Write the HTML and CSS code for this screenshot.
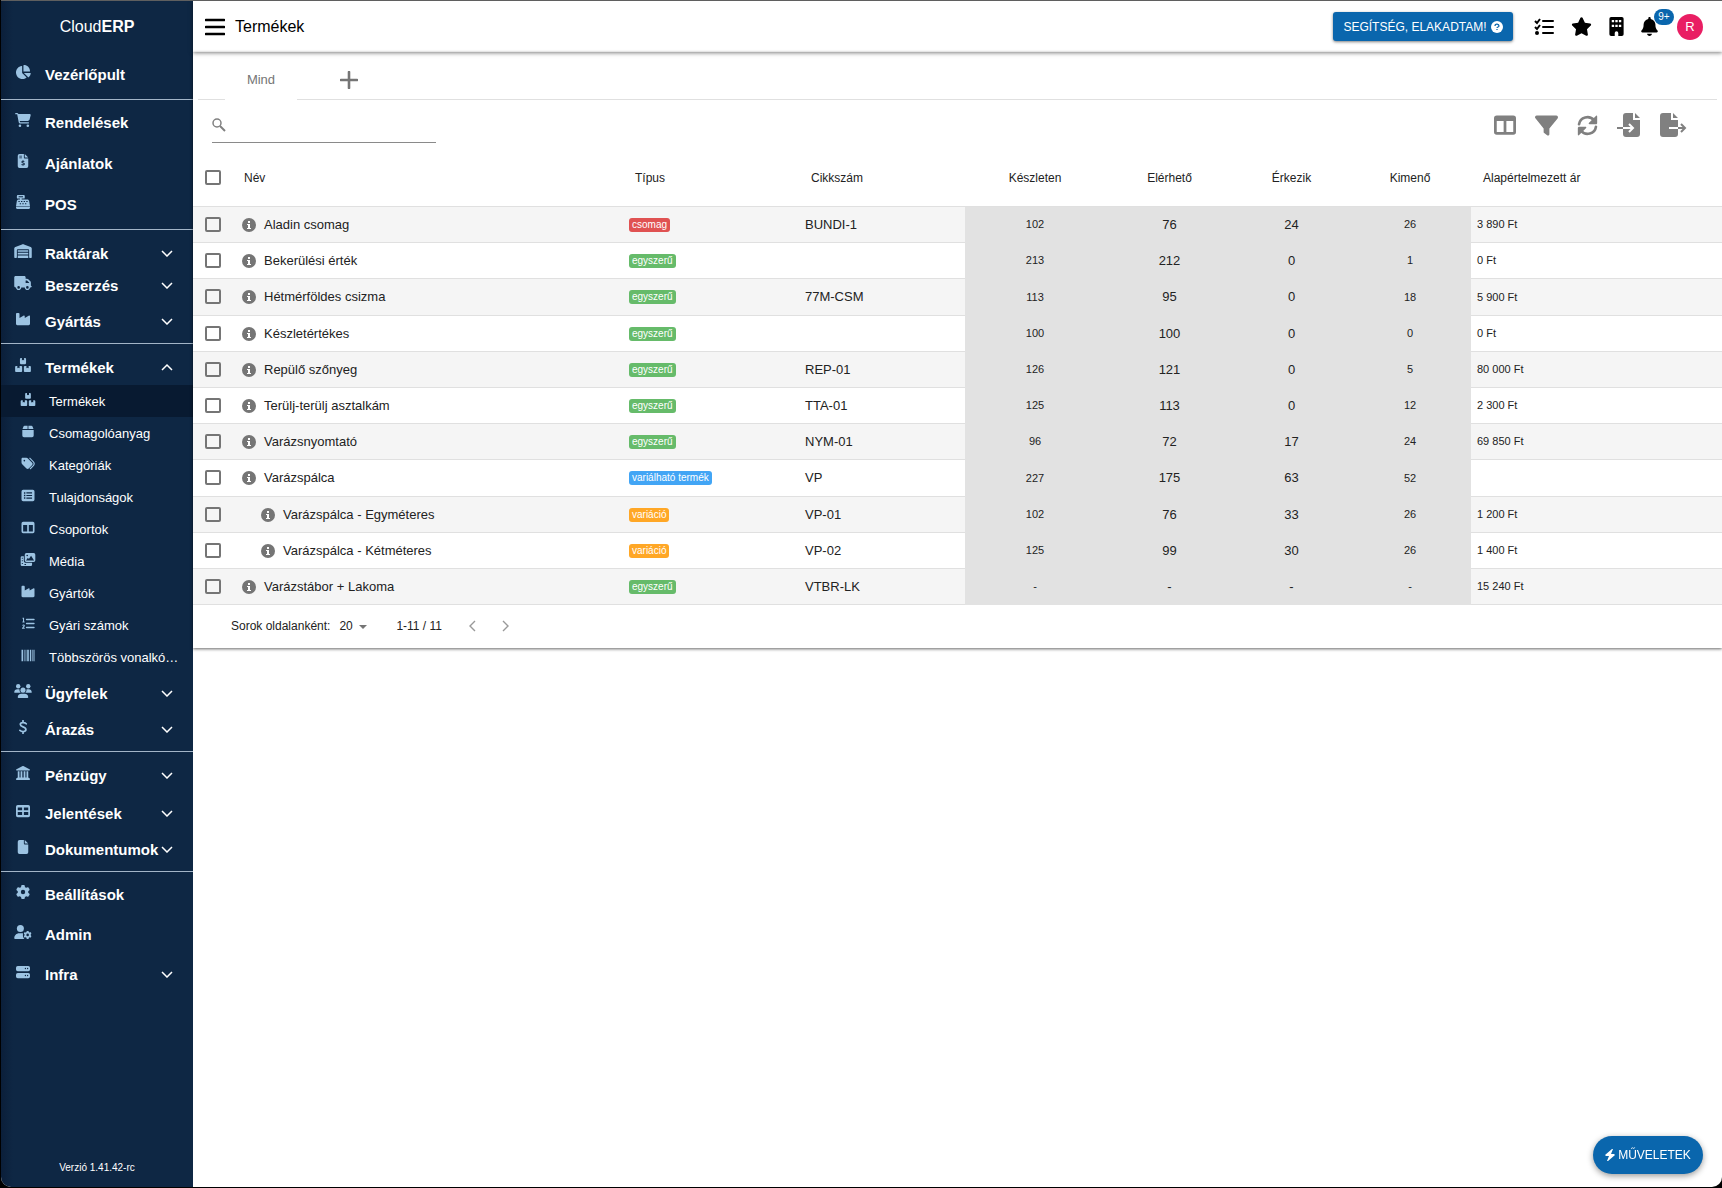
FILE: index.html
```html
<!DOCTYPE html>
<html lang="hu">
<head>
  <meta charset="utf-8">
  <title>CloudERP - Termékek</title>
  <link rel="stylesheet" href="styles.css">
</head>
<body>
  <svg class="sprite" aria-hidden="true">
    <symbol id="pie" viewBox="0 0 576 512"><path d="M304 240V16.600c0-9 7-16.600 16-16.600C443.700 0 544 100.300 544 224c0 9-7.600 16-16.600 16H304zM32 272C32 150.700 122.100 50.300 239 34.300c9.200-1.300 17 6.100 17 15.400V288L412.500 444.500c6.700 6.700 6.200 17.700-1.500 23.100C371.800 495.600 323.800 512 272 512C139.500 512 32 404.600 32 272zm526.400 16c9.300 0 16.600 7.800 15.400 17c-7.700 55.900-34.600 105.600-73.900 142.300c-6 5.600-15.400 5.200-21.200-.7L320 288H558.400z"/></symbol>
    <symbol id="cart" viewBox="0 0 576 512"><path d="M0 24C0 10.700 10.700 0 24 0H69.500c22 0 41.500 12.800 50.600 32h411c26.300 0 45.500 25 38.600 50.400l-41 152.300c-8.500 31.400-37 53.300-69.500 53.300H170.700l5.400 28.500c2.200 11.300 12.100 19.500 23.600 19.500H488c13.300 0 24 10.700 24 24s-10.700 24-24 24H199.700c-34.600 0-64.300-24.600-70.700-58.500L77.400 54.500c-.7-3.800-4-6.500-7.900-6.500H24C10.700 48 0 37.300 0 24zM128 464a48 48 0 1 1 96 0 48 48 0 1 1 -96 0zm336-48a48 48 0 1 1 0 96 48 48 0 1 1 0-96z"/></symbol>
    <symbol id="invoice" viewBox="0 0 384 512"><path fill-rule="evenodd" d="M64 0h160v128a32 32 0 0 0 32 32h128v288a64 64 0 0 1-64 64H64a64 64 0 0 1-64-64V64A64 64 0 0 1 64 0zM256 0l128 128H256zM56 64v28h96V64zM56 128v28h96v-28z"/><path d="M240 278c-20-22-92-24-92 14 0 46 94 22 94 72 0 42-76 42-102 14M192 224v40M192 384v40" fill="none" stroke="#0e2744" stroke-width="38"/></symbol>
    <symbol id="register" viewBox="0 0 512 512"><path fill-rule="evenodd" d="M64 0h224a32 32 0 0 1 32 32v64a32 32 0 0 1-32 32h-80v32h208c32 0 60 22 64 54l31 186H1l31-186c4-32 32-54 64-54h48v-32H64a32 32 0 0 1-32-32V32A32 32 0 0 1 64 0zM96 48v32h160V48zM88 220v40h48v-40zM184 220v40h48v-40zM280 220v40h48v-40zM376 220v40h48v-40zM136 300v40h48v-40zM232 300v40h48v-40zM328 300v40h48v-40zM0 416h512v40a56 56 0 0 1-56 56H56a56 56 0 0 1-56-56z"/></symbol>
    <symbol id="warehouse" viewBox="0 0 640 512"><path fill-rule="evenodd" d="M0 488V171c0-26 16-50 40-59L308 5c8-3 16-3 24 0l268 107c24 9 40 33 40 59v317c0 13-11 24-24 24h-48c-13 0-24-11-24-24V224c0-18-14-32-32-32H128c-18 0-32 14-32 32v264c0 13-11 24-24 24H24c-13 0-24-11-24-24zM128 224h384v56H128zM128 320h384v64H128zM128 424h384v88H128z"/></symbol>
    <symbol id="truck" viewBox="0 0 640 512"><path d="M48 0C21.500 0 0 21.500 0 48V368c0 26.500 21.500 48 48 48H64c0 53 43 96 96 96s96-43 96-96H384c0 53 43 96 96 96s96-43 96-96h32c17.700 0 32-14.300 32-32s-14.300-32-32-32V288 256 237.300c0-17-6.700-33.300-18.700-45.300L512 114.700c-12-12-28.300-18.700-45.300-18.700H416V48c0-26.500-21.500-48-48-48H48zM416 160h50.700L544 237.300V256H416V160zM112 416a48 48 0 1 1 96 0 48 48 0 1 1 -96 0zm368-48a48 48 0 1 1 0 96 48 48 0 1 1 0-96z"/></symbol>
    <symbol id="industry" viewBox="0 0 512 512"><path d="M32 32C14.300 32 0 46.300 0 64V304v48 80c0 26.500 21.500 48 48 48H464c26.500 0 48-21.500 48-48V304 152.200c0-18.200-19.400-29.700-35.400-21.100L320 215.400V152.200c0-18.200-19.400-29.700-35.400-21.100L128 215.400V64c0-17.700-14.300-32-32-32H32z"/></symbol>
    <symbol id="boxes" viewBox="0 0 576 512"><path d="M208 0h40v88l40-20 40 20V0h40c18 0 32 14 32 32v160c0 18-14 32-32 32H208c-18 0-32-14-32-32V32c0-18 14-32 32-32zM32 288h50v88l40-20 40 20v-88h62c18 0 32 14 32 32v160c0 18-14 32-32 32H32c-18 0-32-14-32-32V320c0-18 14-32 32-32zM352 288h62v88l40-20 40 20v-88h50c18 0 32 14 32 32v160c0 18-14 32-32 32H352c-18 0-32-14-32-32V320c0-18 14-32 32-32z"/></symbol>
    <symbol id="box" viewBox="0 0 448 512"><path d="M90 32h118v128H8L46 60c7-17 24-28 44-28zM240 32h118c20 0 37 11 44 28l38 100H240zM0 192h448v224a64 64 0 0 1-64 64H64a64 64 0 0 1-64-64z"/></symbol>
    <symbol id="tags" viewBox="0 0 512 512"><path fill-rule="evenodd" d="M0 80v150c0 17 7 33 19 45l176 176c25 25 65 25 90 0l134-134c25-25 25-65 0-90L242 51c-12-12-28-19-45-19H48C22 32 0 54 0 80zm112 32a32 32 0 1 1 0 64 32 32 0 0 1 0-64z"/><path d="M326 48l133 134c50 50 50 118 0 168L345 462" fill="none" stroke="currentColor" stroke-width="44" stroke-linecap="round"/></symbol>
    <symbol id="listalt" viewBox="0 0 512 512"><path fill-rule="evenodd" d="M64 32h384a64 64 0 0 1 64 64v320a64 64 0 0 1-64 64H64a64 64 0 0 1-64-64V96a64 64 0 0 1 64-64zM96 128v56h56v-56zM192 132v48h224v-48zM96 228v56h56v-56zM192 232v48h224v-48zM96 328v56h56v-56zM192 332v48h224v-48z"/></symbol>
    <symbol id="columns" viewBox="0 0 512 512"><path fill-rule="evenodd" d="M64 32h384a64 64 0 0 1 64 64v320a64 64 0 0 1-64 64H64a64 64 0 0 1-64-64V96a64 64 0 0 1 64-64zM64 160v256h160V160zM288 160v256h160V160z"/></symbol>
    <symbol id="media" viewBox="0 0 576 512"><path fill-rule="evenodd" d="M224 0h288a64 64 0 0 1 64 64v224a64 64 0 0 1-64 64H224a64 64 0 0 1-64-64V64a64 64 0 0 1 64-64zM208 300h320L408 112 322 236l-38-50zM256 64a32 32 0 1 0 0 64 32 32 0 0 0 0-64z"/><path fill-rule="evenodd" d="M48 128h76v176c0 50 34 84 84 84h240v76a48 48 0 0 1-48 48H48a48 48 0 0 1-48-48V176a48 48 0 0 1 48-48zM44 184v40h40v-40zM44 288v40h40v-40zM44 392v40h40v-40zM150 436v36h60v-36z"/></symbol>
    <symbol id="listol" viewBox="0 0 512 512"><path d="M200 96h290M200 256h290M200 416h290" fill="none" stroke="currentColor" stroke-width="60" stroke-linecap="round"/><path d="M40 52h40v140M36 196h88M36 334c30-34 86-18 72 20-10 26-68 70-68 92h88" fill="none" stroke="currentColor" stroke-width="42"/></symbol>
    <symbol id="barcode" viewBox="0 0 512 512"><path d="M0 32h64v448H0zM96 32h24v448H96zM160 32h32v448h-32zM224 32h64v448h-64zM330 32h54v448h-54zM416 32h24v448h-24zM472 32h40v448h-40z"/></symbol>
    <symbol id="users" viewBox="0 0 640 512"><circle cx="144" cy="80" r="80"/><circle cx="512" cy="80" r="80"/><circle cx="320" cy="224" r="92"/><path d="M0 299c0-59 48-107 107-107h43c16 0 31 4 45 10-9 50 7 90 40 118H21c-12 0-21-9-21-21zM405 320c33-28 49-68 40-118 14-6 29-10 45-10h43c59 0 107 48 107 107 0 12-9 21-21 21zM128 485c0-82 52-133 133-133h118c81 0 133 51 133 133 0 15-12 27-27 27H155c-15 0-27-12-27-27z"/></symbol>
    <symbol id="dollar" viewBox="0 0 320 512"><path d="M276 138C226 84 62 76 62 164c0 106 204 68 204 184 0 94-154 92-218 34M160 26v66M160 424v62" fill="none" stroke="currentColor" stroke-width="64" stroke-linecap="round"/></symbol>
    <symbol id="bank" viewBox="0 0 512 512"><path d="M243 4c8-4 18-4 26 0l224 112c24 12 24 44-5 44H24c-29 0-29-32-5-44zM64 192h64v224h40V192h64v224h48V192h64v224h40V192h64v228l56 40c18 14 8 52-14 52H22c-22 0-32-38-14-52l56-40z"/></symbol>
    <symbol id="table" viewBox="0 0 512 512"><path fill-rule="evenodd" d="M64 32h384a64 64 0 0 1 64 64v320a64 64 0 0 1-64 64H64a64 64 0 0 1-64-64V96a64 64 0 0 1 64-64zM64 128v104h160V128zM288 128v104h160V128zM64 296v104h160V296zM288 296v104h160V296z"/></symbol>
    <symbol id="file" viewBox="0 0 384 512"><path d="M64 0h160v128a32 32 0 0 0 32 32h128v288a64 64 0 0 1-64 64H64a64 64 0 0 1-64-64V64A64 64 0 0 1 64 0zM256 0l128 128H256z"/></symbol>
    <symbol id="gear" viewBox="0 0 512 512"><path d="M495.900 166.600c3.200 8.700 .5 18.400-6.400 24.600l-43.300 39.400c1.100 8.300 1.700 16.800 1.700 25.400s-.6 17.100-1.700 25.400l43.300 39.400c6.900 6.200 9.600 15.900 6.400 24.600c-4.400 11.900-9.700 23.300-15.800 34.300l-4.700 8.100c-6.600 11-14 21.400-22.100 31.200c-5.900 7.200-15.700 9.600-24.500 6.800l-55.700-17.700c-13.400 10.300-28.200 18.900-44 25.400l-12.500 57.100c-2 9.100-9 16.300-18.200 17.800c-13.800 2.300-28 3.500-42.500 3.500s-28.700-1.200-42.500-3.500c-9.200-1.500-16.200-8.700-18.200-17.800l-12.500-57.100c-15.800-6.500-30.600-15.100-44-25.400L83.100 425.900c-8.800 2.800-18.600 .3-24.500-6.800c-8.100-9.800-15.500-20.200-22.100-31.200l-4.700-8.100c-6.100-11-11.400-22.400-15.800-34.300c-3.200-8.700-.5-18.400 6.400-24.600l43.300-39.400C64.600 273.100 64 264.600 64 256s.6-17.100 1.700-25.400L22.400 191.200c-6.900-6.200-9.600-15.900-6.400-24.600c4.400-11.900 9.700-23.300 15.800-34.300l4.700-8.100c6.600-11 14-21.400 22.100-31.200c5.900-7.200 15.700-9.600 24.500-6.800l55.700 17.700c13.400-10.300 28.200-18.900 44-25.400l12.500-57.100c2-9.100 9-16.300 18.200-17.800C227.300 1.200 241.500 0 256 0s28.700 1.200 42.500 3.500c9.200 1.500 16.200 8.700 18.200 17.800l12.500 57.100c15.800 6.500 30.600 15.100 44 25.400l55.700-17.700c8.800-2.800 18.600-.3 24.500 6.800c8.100 9.800 15.500 20.200 22.100 31.200l4.700 8.100c6.100 11 11.400 22.400 15.800 34.300zM256 336a80 80 0 1 0 0-160 80 80 0 1 0 0 160z"/></symbol>
    <symbol id="usergear" viewBox="0 0 640 512"><circle cx="224" cy="128" r="128"/><path d="M0 482c0-98 80-178 178-178h92c20 0 38 3 56 9-24 60-8 140 44 199H30c-17 0-30-13-30-30z"/><svg x="340" y="212" width="300" height="300"><use href="#gear"/></svg></symbol>
    <symbol id="server" viewBox="0 0 512 512"><path fill-rule="evenodd" d="M64 32h384a64 64 0 0 1 64 64v64a64 64 0 0 1-64 64H64a64 64 0 0 1-64-64V96a64 64 0 0 1 64-64zM344 104a24 24 0 1 0 0 48 24 24 0 0 0 0-48zM424 104a24 24 0 1 0 0 48 24 24 0 0 0 0-48zM64 288h384a64 64 0 0 1 64 64v64a64 64 0 0 1-64 64H64a64 64 0 0 1-64-64v-64a64 64 0 0 1 64-64zM344 360a24 24 0 1 0 0 48 24 24 0 0 0 0-48zM424 360a24 24 0 1 0 0 48 24 24 0 0 0 0-48z"/></symbol>
    <symbol id="down" viewBox="0 0 24 16"><path d="M2 4l10 10 10-10" fill="none" stroke="currentColor" stroke-width="3"/></symbol>
    <symbol id="up" viewBox="0 0 24 16"><path d="M2 14l10-10 10 10" fill="none" stroke="currentColor" stroke-width="3"/></symbol>
    <symbol id="info" viewBox="0 0 14 14"><circle cx="7" cy="7" r="7" fill="#757575"/><path d="M6 3h2v2H6zM5 6h3v4h1v1H5v-1h1V7H5z" fill="#fff"/></symbol>
    <symbol id="menu" viewBox="0 0 20 18"><path d="M1 2h18M1 9h18M1 16h18" stroke="currentColor" stroke-width="2.600" stroke-linecap="round"/></symbol>
    <symbol id="question" viewBox="0 0 12 12"><circle cx="6" cy="6" r="6" fill="#fff"/><path d="M4 5c0-3 4-2 4 0 0 1-2 1-2 2M6 8v1" fill="none" stroke="#0a66ad" stroke-width="1.300"/></symbol>
    <symbol id="tasks" viewBox="0 0 20 18"><path d="M9 3h10M9 9h10M9 15h10" stroke="currentColor" stroke-width="2" stroke-linecap="round"/><path d="M1 3l2 2 3-4M1 9l2 2 3-4" fill="none" stroke="currentColor" stroke-width="2"/><circle cx="3" cy="15" r="2"/></symbol>
    <symbol id="star" viewBox="0 0 576 512"><path d="M316.900 18C311.600 7 300.400 0 288.100 0s-23.400 7-28.800 18L195 150.300 51.400 171.500c-12 1.800-22 10.200-25.700 21.700s-.7 24.200 7.900 32.700L137.800 329 113.200 474.700c-2 12 3 24.200 12.900 31.300s23 8 33.800 2.300l128.300-68.500 128.300 68.500c10.800 5.700 23.900 4.900 33.800-2.300s14.900-19.300 12.900-31.300L438.500 329 542.700 225.900c8.600-8.500 11.700-21.200 7.900-32.700s-13.700-19.900-25.700-21.700L381.200 150.300 316.900 18z"/></symbol>
    <symbol id="building" viewBox="0 0 384 512"><path fill-rule="evenodd" d="M48 0h288a48 48 0 0 1 48 48v416a48 48 0 0 1-48 48h-96v-80a48 48 0 0 0-96 0v80H48a48 48 0 0 1-48-48V48A48 48 0 0 1 48 0zM64 80v64h64V80zM160 80v64h64V80zM256 80v64h64V80zM64 208v64h64v-64zM160 208v64h64v-64zM256 208v64h64v-64z"/></symbol>
    <symbol id="bell" viewBox="0 0 448 512"><path d="M224 0c-17.700 0-32 14.300-32 32V51.200C119 66 64 130.600 64 208v18.800c0 47-17.300 92.400-48.500 127.600l-7.400 8.300c-8.400 9.400-10.400 22.900-5.300 34.400S19.400 416 32 416H416c12.600 0 24-7.400 29.200-18.900s3.100-25-5.300-34.400l-7.400-8.300C401.300 319.200 384 273.900 384 226.800V208c0-77.400-55-142-128-156.800V32c0-17.700-14.300-32-32-32zm45.300 493.300c12-12 18.700-28.300 18.700-45.300H224 160c0 17 6.700 33.300 18.700 45.300s28.300 18.700 45.300 18.700s33.300-6.700 45.300-18.700z"/></symbol>
    <symbol id="plus" viewBox="0 0 18 18"><path d="M9 1v16M1 9h16" stroke="currentColor" stroke-width="2.600" stroke-linecap="round"/></symbol>
    <symbol id="search" viewBox="0 0 28 28"><circle cx="10" cy="10" r="8" fill="none" stroke="currentColor" stroke-width="3"/><path d="M16 16l10 10" stroke="currentColor" stroke-width="4"/></symbol>
    <symbol id="filter" viewBox="0 0 512 512"><path d="M3.900 54.900C10.500 40.900 24.500 32 40 32H472c15.500 0 29.500 8.900 36.100 22.900s4.600 30.500-5.200 42.500L320 320.900V448c0 12.100-6.800 23.200-17.700 28.600s-23.800 4.300-33.500-3l-64-48c-8.100-6-12.800-15.500-12.800-25.600V320.900L9 97.300C-.7 85.400-2.800 68.800 3.900 54.900z"/></symbol>
    <symbol id="refresh" viewBox="0 0 512 512"><path d="M50 226C76 50 300-10 420 130M462 286C436 462 212 522 92 382" fill="none" stroke="currentColor" stroke-width="64" stroke-linecap="round"/><path d="M492 38v154c0 18-14 32-32 32H306c-20 0-28-18-18-30L466 18c10-10 26 0 26 20zM20 474V320c0-18 14-32 32-32h154c20 0 28 18 18 30L46 494c-10 10-26 0-26-20z"/></symbol>
    <symbol id="import" viewBox="0 0 24 24"><path d="M9 0h7v7h7v14a3 3 0 0 1-3 3H9a3 3 0 0 1-3-3V3a3 3 0 0 1 3-3zM18 0l5 5h-5z"/><path d="M6 15h9M12 11l4 4-4 4" fill="none" stroke="#fff" stroke-width="2"/><path d="M0 15h6" stroke="currentColor" stroke-width="2"/></symbol>
    <symbol id="export" viewBox="0 0 27 24"><path d="M3 0h8v7h7v14a3 3 0 0 1-3 3H3a3 3 0 0 1-3-3V3a3 3 0 0 1 3-3zM13 0l5 5h-5z"/><path d="M9 15h9" stroke="#fff" stroke-width="2"/><path d="M18 15h7M21 11l4 4-4 4" fill="none" stroke="currentColor" stroke-width="2"/></symbol>
    <symbol id="bolt" viewBox="0 0 10 12"><path d="M7 0L0 6l1 1h3l-2 5 1 0 7-6-1-1H6l2-5z"/></symbol>
    <symbol id="left" viewBox="0 0 8 12"><path d="M6 1L1 6l5 5" fill="none" stroke="currentColor" stroke-width="1.400"/></symbol>
    <symbol id="right" viewBox="0 0 8 12"><path d="M2 1l5 5-5 5" fill="none" stroke="currentColor" stroke-width="1.400"/></symbol>
  </svg>

  <div class="app">
    <aside class="sidebar">
      <div class="brand">Cloud<b>ERP</b></div>
      <nav>
        <div class="group first">
          <a href="#" class="item"><svg class="ico"><use href="#pie"/></svg><span>Vezérlőpult</span></a>
        </div>
        <div class="group tall">
          <a href="#" class="item"><svg class="ico"><use href="#cart"/></svg><span>Rendelések</span></a>
          <a href="#" class="item"><svg class="ico"><use href="#invoice"/></svg><span>Ajánlatok</span></a>
          <a href="#" class="item"><svg class="ico"><use href="#register"/></svg><span>POS</span></a>
        </div>
        <div class="group">
          <a href="#" class="item"><svg class="ico"><use href="#warehouse"/></svg><span>Raktárak</span><svg class="arrow"><use href="#down"/></svg></a>
          <a href="#" class="item tight"><svg class="ico"><use href="#truck"/></svg><span>Beszerzés</span><svg class="arrow"><use href="#down"/></svg></a>
          <a href="#" class="item"><svg class="ico"><use href="#industry"/></svg><span>Gyártás</span><svg class="arrow"><use href="#down"/></svg></a>
        </div>
        <div class="group">
          <a href="#" class="item"><svg class="ico"><use href="#boxes"/></svg><span>Termékek</span><svg class="arrow"><use href="#up"/></svg></a>
          <div class="submenu">
            <a href="#" class="sub active"><svg class="ico"><use href="#boxes"/></svg><span>Termékek</span></a>
            <a href="#" class="sub"><svg class="ico"><use href="#box"/></svg><span>Csomagolóanyag</span></a>
            <a href="#" class="sub"><svg class="ico"><use href="#tags"/></svg><span>Kategóriák</span></a>
            <a href="#" class="sub"><svg class="ico"><use href="#listalt"/></svg><span>Tulajdonságok</span></a>
            <a href="#" class="sub"><svg class="ico"><use href="#columns"/></svg><span>Csoportok</span></a>
            <a href="#" class="sub"><svg class="ico"><use href="#media"/></svg><span>Média</span></a>
            <a href="#" class="sub"><svg class="ico"><use href="#industry"/></svg><span>Gyártók</span></a>
            <a href="#" class="sub"><svg class="ico"><use href="#listol"/></svg><span>Gyári számok</span></a>
            <a href="#" class="sub"><svg class="ico"><use href="#barcode"/></svg><span>Többszörös vonalkó…</span></a>
          </div>
          <a href="#" class="item"><svg class="ico"><use href="#users"/></svg><span>Ügyfelek</span><svg class="arrow"><use href="#down"/></svg></a>
          <a href="#" class="item"><svg class="ico"><use href="#dollar"/></svg><span>Árazás</span><svg class="arrow"><use href="#down"/></svg></a>
        </div>
        <div class="group">
          <a href="#" class="item spaced"><svg class="ico"><use href="#bank"/></svg><span>Pénzügy</span><svg class="arrow"><use href="#down"/></svg></a>
          <a href="#" class="item"><svg class="ico"><use href="#table"/></svg><span>Jelentések</span><svg class="arrow"><use href="#down"/></svg></a>
          <a href="#" class="item"><svg class="ico"><use href="#file"/></svg><span>Dokumentumok</span><svg class="arrow"><use href="#down"/></svg></a>
        </div>
        <div class="group tall last">
          <a href="#" class="item"><svg class="ico"><use href="#gear"/></svg><span>Beállítások</span></a>
          <a href="#" class="item"><svg class="ico"><use href="#usergear"/></svg><span>Admin</span></a>
          <a href="#" class="item"><svg class="ico"><use href="#server"/></svg><span>Infra</span><svg class="arrow"><use href="#down"/></svg></a>
        </div>
      </nav>
      <div class="version">Verzió 1.41.42-rc</div>
    </aside>

    <main class="main">
      <header class="topbar">
        <button class="icon-btn" aria-label="Menü"><svg width="20" height="18"><use href="#menu"/></svg></button>
        <h1>Termékek</h1>
        <button class="help">SEGÍTSÉG, ELAKADTAM! <svg width="12" height="12"><use href="#question"/></svg></button>
        <div class="top-icons">
          <button class="icon-btn" aria-label="Feladatok"><svg width="20" height="18"><use href="#tasks"/></svg></button>
          <button class="icon-btn" aria-label="Kedvencek"><svg width="21" height="19"><use href="#star"/></svg></button>
          <button class="icon-btn" aria-label="Cég"><svg width="15" height="19"><use href="#building"/></svg></button>
          <button class="icon-btn bell" aria-label="Értesítések"><svg width="17" height="19"><use href="#bell"/></svg><span class="badge">9+</span></button>
        </div>
        <button class="avatar">R</button>
      </header>

      <section class="card">
        <div class="tabs">
          <button class="tab">Mind</button>
          <div class="tabs-rest">
            <button class="icon-btn" aria-label="Új nézet"><svg width="18" height="18"><use href="#plus"/></svg></button>
          </div>
        </div>

        <div class="toolbar">
          <label class="search">
            <svg width="14" height="14"><use href="#search"/></svg>
            <input type="text" aria-label="Keresés">
          </label>
          <div class="tools">
            <button class="icon-btn" aria-label="Oszlopok"><svg width="22" height="22"><use href="#columns"/></svg></button>
            <button class="icon-btn" aria-label="Szűrő"><svg width="23" height="23"><use href="#filter"/></svg></button>
            <button class="icon-btn" aria-label="Frissítés"><svg width="21" height="21"><use href="#refresh"/></svg></button>
            <button class="icon-btn" aria-label="Importálás"><svg width="24" height="24"><use href="#import"/></svg></button>
            <button class="icon-btn" aria-label="Exportálás"><svg width="27" height="24"><use href="#export"/></svg></button>
          </div>
        </div>

        <table>
          <colgroup>
            <col class="c-check"><col class="c-name"><col class="c-type"><col class="c-sku">
            <col class="c-stock"><col class="c-avail"><col class="c-incoming"><col class="c-outgoing"><col class="c-price">
          </colgroup>
          <thead>
            <tr>
              <th class="check"><input type="checkbox" aria-label="Összes kijelölése"></th>
              <th>Név</th>
              <th>Típus</th>
              <th>Cikkszám</th>
              <th class="num">Készleten</th>
              <th class="num">Elérhető</th>
              <th class="num">Érkezik</th>
              <th class="num">Kimenő</th>
              <th>Alapértelmezett ár</th>
            </tr>
          </thead>
          <tbody>
            <tr>
              <td class="check"><input type="checkbox" aria-label="Aladin csomag"></td>
              <td class="name"><svg><use href="#info"/></svg>Aladin csomag</td>
              <td><span class="tag red">csomag</span></td>
              <td>BUNDI-1</td>
              <td class="num small">102</td><td class="num">76</td><td class="num">24</td><td class="num small">26</td>
              <td class="small">3 890 Ft</td>
            </tr>
            <tr>
              <td class="check"><input type="checkbox" aria-label="Bekerülési érték"></td>
              <td class="name"><svg><use href="#info"/></svg>Bekerülési érték</td>
              <td><span class="tag green">egyszerű</span></td>
              <td></td>
              <td class="num small">213</td><td class="num">212</td><td class="num">0</td><td class="num small">1</td>
              <td class="small">0 Ft</td>
            </tr>
            <tr>
              <td class="check"><input type="checkbox" aria-label="Hétmérföldes csizma"></td>
              <td class="name"><svg><use href="#info"/></svg>Hétmérföldes csizma</td>
              <td><span class="tag green">egyszerű</span></td>
              <td>77M-CSM</td>
              <td class="num small">113</td><td class="num">95</td><td class="num">0</td><td class="num small">18</td>
              <td class="small">5 900 Ft</td>
            </tr>
            <tr>
              <td class="check"><input type="checkbox" aria-label="Készletértékes"></td>
              <td class="name"><svg><use href="#info"/></svg>Készletértékes</td>
              <td><span class="tag green">egyszerű</span></td>
              <td></td>
              <td class="num small">100</td><td class="num">100</td><td class="num">0</td><td class="num small">0</td>
              <td class="small">0 Ft</td>
            </tr>
            <tr>
              <td class="check"><input type="checkbox" aria-label="Repülő szőnyeg"></td>
              <td class="name"><svg><use href="#info"/></svg>Repülő szőnyeg</td>
              <td><span class="tag green">egyszerű</span></td>
              <td>REP-01</td>
              <td class="num small">126</td><td class="num">121</td><td class="num">0</td><td class="num small">5</td>
              <td class="small">80 000 Ft</td>
            </tr>
            <tr>
              <td class="check"><input type="checkbox" aria-label="Terülj-terülj asztalkám"></td>
              <td class="name"><svg><use href="#info"/></svg>Terülj-terülj asztalkám</td>
              <td><span class="tag green">egyszerű</span></td>
              <td>TTA-01</td>
              <td class="num small">125</td><td class="num">113</td><td class="num">0</td><td class="num small">12</td>
              <td class="small">2 300 Ft</td>
            </tr>
            <tr>
              <td class="check"><input type="checkbox" aria-label="Varázsnyomtató"></td>
              <td class="name"><svg><use href="#info"/></svg>Varázsnyomtató</td>
              <td><span class="tag green">egyszerű</span></td>
              <td>NYM-01</td>
              <td class="num small">96</td><td class="num">72</td><td class="num">17</td><td class="num small">24</td>
              <td class="small">69 850 Ft</td>
            </tr>
            <tr>
              <td class="check"><input type="checkbox" aria-label="Varázspálca"></td>
              <td class="name"><svg><use href="#info"/></svg>Varázspálca</td>
              <td><span class="tag blue">variálható termék</span></td>
              <td>VP</td>
              <td class="num small">227</td><td class="num">175</td><td class="num">63</td><td class="num small">52</td>
              <td class="small"></td>
            </tr>
            <tr>
              <td class="check"><input type="checkbox" aria-label="Varázspálca - Egyméteres"></td>
              <td class="name child"><svg><use href="#info"/></svg>Varázspálca - Egyméteres</td>
              <td><span class="tag orange">variáció</span></td>
              <td>VP-01</td>
              <td class="num small">102</td><td class="num">76</td><td class="num">33</td><td class="num small">26</td>
              <td class="small">1 200 Ft</td>
            </tr>
            <tr>
              <td class="check"><input type="checkbox" aria-label="Varázspálca - Kétméteres"></td>
              <td class="name child"><svg><use href="#info"/></svg>Varázspálca - Kétméteres</td>
              <td><span class="tag orange">variáció</span></td>
              <td>VP-02</td>
              <td class="num small">125</td><td class="num">99</td><td class="num">30</td><td class="num small">26</td>
              <td class="small">1 400 Ft</td>
            </tr>
            <tr>
              <td class="check"><input type="checkbox" aria-label="Varázstábor + Lakoma"></td>
              <td class="name"><svg><use href="#info"/></svg>Varázstábor + Lakoma</td>
              <td><span class="tag green">egyszerű</span></td>
              <td>VTBR-LK</td>
              <td class="num small">-</td><td class="num">-</td><td class="num">-</td><td class="num small">-</td>
              <td class="small">15 240 Ft</td>
            </tr>
          </tbody>
        </table>

        <div class="pager">
          <label for="rows">Sorok oldalanként:</label>
          <div class="select">
            <select id="rows"><option>20</option><option>50</option></select>
          </div>
          <span class="range">1-11 / 11</span>
          <button class="icon-btn" aria-label="Előző oldal"><svg width="8" height="12"><use href="#left"/></svg></button>
          <button class="icon-btn" aria-label="Következő oldal"><svg width="8" height="12"><use href="#right"/></svg></button>
        </div>
      </section>
    </main>
  </div>

  <button class="actions"><svg width="10" height="12"><use href="#bolt"/></svg>MŰVELETEK</button>
</body>
</html>
```
FILE: styles.css
```css
* {
  box-sizing: border-box;
}

body {
  margin: 0;
  padding: 0 0 1px 1px;
  background-color: #000;
  font-family: "Liberation Sans", Arial, Helvetica, sans-serif;
  font-size: 13px;
  color: #222;
}

svg {
  display: block;
  fill: currentColor;
}

button {
  font-family: inherit;
  cursor: pointer;
}

.sprite {
  position: absolute;
  width: 0;
  height: 0;
}

.app {
  display: flex;
  min-height: calc(100vh - 1px);
  border-top: 1px solid #5f5f5f;
  border-radius: 0 0 10px 10px;
  background-color: #fff;
  overflow: hidden;
}

/* sidebar */
.sidebar {
  display: flex;
  flex-direction: column;
  flex: none;
  width: 192px;
  background: linear-gradient(90deg, #0b1f3a, #0e2744 12px);
  color: #fff;
}

.brand {
  height: 50px;
  line-height: 51px;
  text-align: center;
  font-size: 16px;
}

.group {
  padding: 5px 0 4px;
  border-bottom: 1px solid #a3b5c8;
}

.group.first {
  padding: 5px 0 7px;
}

.group.tall {
  display: flex;
  flex-direction: column;
  gap: 1px;
  padding: 2px 0 5px;
}

.group.last {
  gap: 0;
  border-bottom: none;
}

.item,
.sub {
  display: flex;
  align-items: center;
  color: #fff;
  text-decoration: none;
  white-space: nowrap;
}

.item {
  height: 36px;
  padding: 0 20px 0 13px;
  font-size: 15px;
  font-weight: bold;
}

.tall .item {
  height: 40px;
}

.item.tight {
  height: 28px;
  margin-bottom: 4px;
}

.item.spaced {
  margin-bottom: 2px;
}

.item span {
  flex: 1;
}

.ico {
  flex: none;
  width: 18px;
  height: 14px;
  margin: 0 13px 4px 0;
  color: #9cc3e2;
}

.arrow {
  width: 12px;
  height: 8px;
}

.submenu {
  margin-bottom: 2px;
}

.sub {
  height: 32px;
  padding-left: 18px;
  font-size: 13px;
}

.sub .ico {
  height: 13px;
  margin-right: 12px;
}

.sub.active {
  background-color: #081a31;
}

.version {
  margin-top: auto;
  padding-bottom: 14px;
  text-align: center;
  font-size: 10px;
}

/* top bar */
.main {
  flex: 1;
  min-width: 0;
}

.topbar {
  position: relative;
  display: flex;
  align-items: center;
  height: 51px;
  padding: 0 19px 0 12px;
  color: #000;
  box-shadow: 0 1px 4px rgba(0, 0, 0, 0.5);
}

.topbar h1 {
  margin: 0 auto 0 10px;
  font-size: 16px;
  font-weight: normal;
}

.icon-btn {
  padding: 0;
  border: none;
  background: none;
  color: inherit;
}

.help {
  display: flex;
  align-items: center;
  justify-content: center;
  gap: 4px;
  width: 180px;
  height: 29px;
  padding: 0;
  border: none;
  border-radius: 3px;
  background-color: #0a66ad;
  color: #fff;
  font-size: 12px;
  white-space: nowrap;
  box-shadow: 0 1px 3px rgba(0, 0, 0, 0.5);
}

.top-icons {
  display: flex;
  align-items: center;
  gap: 17px;
  margin: 0 19px 0 21px;
}

.bell {
  position: relative;
}

.badge {
  position: absolute;
  top: -8px;
  left: 13px;
  width: 20px;
  height: 16px;
  border-radius: 8px;
  background-color: #0a66ad;
  color: #fff;
  font-size: 10px;
  line-height: 16px;
  text-align: center;
}

.avatar {
  width: 26px;
  height: 26px;
  padding: 0;
  border: none;
  border-radius: 50%;
  background-color: #e91e63;
  color: #fff;
  font-size: 13px;
}

/* product list */
.card {
  background-color: #fff;
  box-shadow: 0 1px 3px rgba(0, 0, 0, 0.6);
}

.tabs {
  display: flex;
  height: 48px;
  padding: 0 5px;
  color: #757575;
}

.tabs::before {
  content: "";
  width: 27px;
  border-bottom: 1px solid #e0e0e0;
}

.tab {
  width: 72px;
  padding: 7px 0 0;
  border: none;
  background: none;
  color: inherit;
  font-size: 13px;
}

.tabs-rest {
  display: flex;
  flex: 1;
  align-items: center;
  padding: 8px 0 0 43px;
  border-bottom: 1px solid #e0e0e0;
}

.toolbar {
  display: flex;
  justify-content: space-between;
  height: 50px;
  padding: 0 35px 0 19px;
  color: #808080;
}

.search {
  display: flex;
  align-items: center;
  width: 224px;
  height: 43px;
  padding-top: 8px;
  border-bottom: 1px solid #8a8a8a;
}

.search input {
  flex: 1;
  min-width: 0;
  margin-left: 8px;
  border: none;
  outline: none;
  background: none;
}

.tools {
  display: flex;
  align-items: center;
  gap: 19px;
}

table {
  width: 100%;
  table-layout: fixed;
  border-collapse: collapse;
}

.c-check {
  width: 39px;
}

.c-type {
  width: 176px;
}

.c-sku {
  width: 166px;
}

.c-stock {
  width: 140px;
}

.c-avail {
  width: 129px;
}

.c-incoming {
  width: 115px;
}

.c-outgoing {
  width: 122px;
}

.c-price {
  width: 251px;
}

th {
  height: 56px;
  padding: 0 12px;
  border-bottom: 1px solid #e0e0e0;
  font-size: 12px;
  font-weight: normal;
  text-align: left;
}

td {
  height: 36px;
  padding: 0 6px;
  border-bottom: 1px solid #e0e0e0;
}

tbody tr:nth-child(5n + 3) td {
  height: 37px;
}

tbody tr:nth-child(odd) {
  background-color: #f5f5f5;
}

td.num {
  background-color: #e2e2e2;
  border-color: #e2e2e2;
}

.num {
  padding: 0;
  text-align: center;
}

td.small {
  font-size: 11px;
}

.check {
  padding: 0 0 0 12px;
}

.check input {
  display: block;
  appearance: none;
  width: 16px;
  height: 15px;
  margin: 0;
  border: 2px solid #757575;
  border-radius: 2px;
}

.name {
  padding-left: 10px;
}

.name svg {
  float: left;
  width: 14px;
  height: 14px;
  margin: 1px 8px 0 0;
}

.name.child {
  padding-left: 29px;
}

.tag {
  display: inline-block;
  height: 14px;
  padding: 0 3px;
  border-radius: 3px;
  color: #fff;
  font-size: 10px;
  line-height: 14px;
  vertical-align: middle;
}

.red {
  background-color: #e05252;
}

.green {
  background-color: #66bb6a;
}

.blue {
  background-color: #42a5f5;
}

.orange {
  background-color: #ffa726;
}

.pager {
  display: flex;
  align-items: center;
  height: 43px;
  padding-left: 38px;
  font-size: 12px;
}

.select {
  position: relative;
  margin: 0 29px 0 9px;
}

.select::after {
  content: "";
  position: absolute;
  top: 6px;
  right: 0;
  border: 4px solid transparent;
  border-top-color: #757575;
}

.select select {
  appearance: none;
  display: block;
  width: 28px;
  padding: 0;
  border: none;
  background: none;
  color: inherit;
  font-family: inherit;
  font-size: 12px;
}

.pager .icon-btn {
  margin-left: 24px;
  color: #999;
}

.range {
  margin-right: 3px;
}

.actions {
  position: fixed;
  right: 19px;
  bottom: 14px;
  display: flex;
  align-items: center;
  justify-content: center;
  gap: 3px;
  width: 110px;
  height: 38px;
  padding: 0;
  border: none;
  border-radius: 19px;
  background-color: #0a66ad;
  color: #fff;
  font-size: 12px;
  box-shadow: 0 2px 6px rgba(0, 0, 0, 0.4);
}
```
